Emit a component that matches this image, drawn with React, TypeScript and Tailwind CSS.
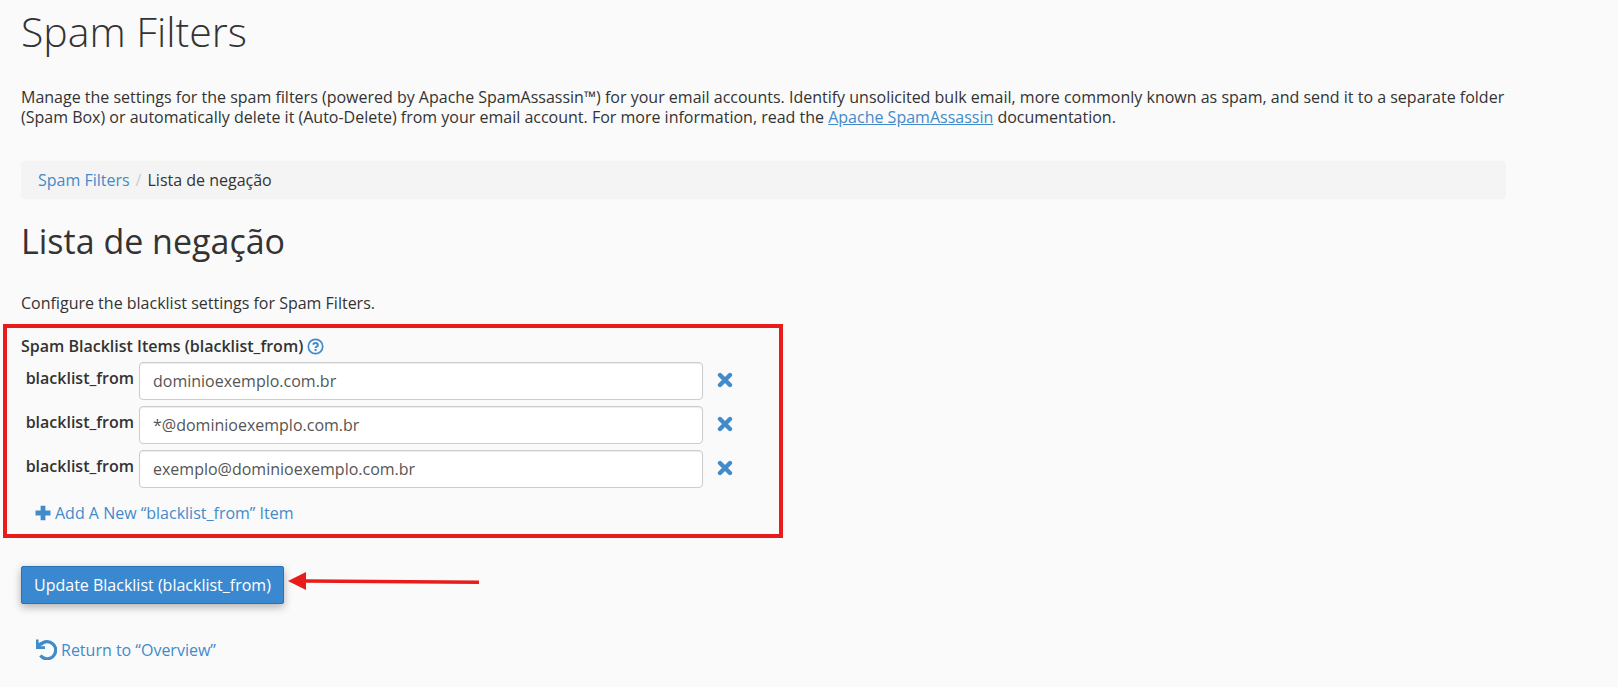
import React, { useState } from 'react';

const initialItems = [
  'dominioexemplo.com.br',
  '*@dominioexemplo.com.br',
  'exemplo@dominioexemplo.com.br',
];

const HelpIcon: React.FC = () => (
  <svg width="17" height="17" viewBox="0 0 17 17" fill="none" stroke="currentColor" aria-hidden="true">
    <circle cx="8.5" cy="8.5" r="7.2" strokeWidth="1.7" />
    <path d="M6 6.6C6.4 5.3 7.4 4.9 8.5 4.9c1.4 0 2.4.8 2.4 2 0 1.8-2.3 1.6-2.3 3" strokeWidth="2" />
    <path d="M7.5 10.9h2.1v2H7.5z" fill="currentColor" stroke="none" />
  </svg>
);

const RemoveIcon: React.FC = () => (
  <svg width="16" height="16" viewBox="0 0 16 16" fill="none" stroke="currentColor" aria-hidden="true">
    <path d="M3 3l10 10M13 3L3 13" strokeWidth="4.4" strokeLinecap="round" />
  </svg>
);

const PlusIcon: React.FC = () => (
  <svg width="16" height="16" viewBox="0 0 16 16" fill="none" stroke="currentColor" aria-hidden="true">
    <path d="M.5 8h15M8 .8v14.4" strokeWidth="4.8" />
  </svg>
);

const UndoIcon: React.FC = () => (
  <svg width="21" height="21" viewBox="0 0 21 21" fill="none" stroke="currentColor" aria-hidden="true">
    <path d="M4.6 5.6A8.6 8.6 0 1 1 4.4 16.6" strokeWidth="3.2" />
    <path d="M0 .5h2.6v3.6L5 3l1.4 2.2L4.6 7.3H9V10H0z" fill="currentColor" stroke="none" />
  </svg>
);

interface BlacklistRowProps {
  id: string;
  value: string;
  onChange: (value: string) => void;
  onRemove: () => void;
}

const BlacklistRow: React.FC<BlacklistRowProps> = ({ id, value, onChange, onRemove }) => {
  return (
    <div className="flex items-start">
      <label htmlFor={id} className="w-[118px] shrink-0 pt-1 pr-[5px] text-right font-semibold leading-6">
        blacklist_from
      </label>
      <input
        id={id}
        type="text"
        value={value}
        onChange={(e) => onChange(e.target.value)}
        className="h-[38px] min-w-0 flex-1 rounded border border-[#ccc] bg-white px-[13px] text-[#555] shadow-[inset_0_1px_1px_rgba(0,0,0,0.075)]"
      />
      <button
        type="button"
        onClick={onRemove}
        aria-label={`Remove ${value}`}
        className="flex h-9 w-11 shrink-0 items-center justify-center text-[#428bca]"
      >
        <RemoveIcon />
      </button>
    </div>
  );
};

const App: React.FC = () => {
  const [items, setItems] = useState(initialItems);

  const updateItem = (index: number, value: string) => {
    setItems(items.map((item, i) => (i === index ? value : item)));
  };

  return (
    <main className="min-h-screen bg-[#fafafa] pl-[21px] pr-28 pt-[7px] pb-6 font-['Open_Sans',sans-serif] text-base leading-5 text-[#333]">
      <h1 className="text-[41px] font-light leading-[48px]">Spam Filters</h1>

      <p className="mt-8">
        Manage the settings for the spam filters (powered by Apache SpamAssassin™) for your email accounts. Identify
        unsolicited bulk email, more commonly known as spam, and send it to a separate folder (Spam Box) or
        automatically delete it (Auto-Delete) from your email account. For more information, read the{' '}
        <a href="#docs" className="text-[#428bca] underline">Apache SpamAssassin</a> documentation.
      </p>

      <nav aria-label="Breadcrumb" className="mt-[34px] rounded bg-[#f4f4f4] px-[17px] py-[9px]">
        <ol className="flex">
          <li>
            <a href="#spam-filters" className="text-[#428bca]">Spam Filters</a>
            <span className="px-1.5 text-[#ccc]">/</span>
          </li>
          <li>Lista de negação</li>
        </ol>
      </nav>

      <h2 className="mt-5 text-[34px] leading-[44px]">Lista de negação</h2>

      <p className="mt-[30px]">Configure the blacklist settings for Spam Filters.</p>

      <form onSubmit={(e) => e.preventDefault()}>
        <section className="relative mt-[11px] w-[762px] max-w-full pt-2.5 pb-[15px]">
          <div className="pointer-events-none absolute inset-y-0 -left-[18px] right-0 border-4 border-[#e91c1c]" />
          <h3 className="flex items-center font-semibold leading-6">
            Spam Blacklist Items (blacklist_from)
            <button type="button" aria-label="Help" className="ml-1 text-[#428bca]">
              <HelpIcon />
            </button>
          </h3>
          <div className="mt-1 mr-9 flex flex-col gap-1.5">
            {items.map((item, index) => (
              <BlacklistRow
                key={index}
                id={`blacklist-${index}`}
                value={item}
                onChange={(value) => updateItem(index, value)}
                onRemove={() => setItems(items.filter((_, i) => i !== index))}
              />
            ))}
          </div>
          <button
            type="button"
            onClick={() => setItems([...items, ''])}
            className="mt-[15px] ml-3.5 flex items-center gap-1 text-[#428bca]"
          >
            <PlusIcon />
            Add A New “blacklist_from” Item
          </button>
        </section>

        <div className="mt-7 flex items-start">
          <button
            type="submit"
            className="h-[38px] rounded-xs border border-[#2a72b5] bg-[#3a89d0] px-3 text-white shadow-[0_3px_8px_rgba(0,0,0,0.3)]"
          >
            Update Blacklist (blacklist_from)
          </button>
          <svg className="ml-1 mt-1.5" width="192" height="20" viewBox="0 0 192 20" fill="#e91c1c" aria-hidden="true">
            <path d="M0 9 18 0v18z" />
            <path d="M17 7.3 191 8.5v3.6L17 10.8z" />
          </svg>
        </div>
      </form>

      <a href="#overview" className="mt-[35px] ml-[15px] inline-flex items-center gap-1 text-[#428bca]">
        <UndoIcon />
        Return to “Overview”
      </a>
    </main>
  );
};

export default App;
